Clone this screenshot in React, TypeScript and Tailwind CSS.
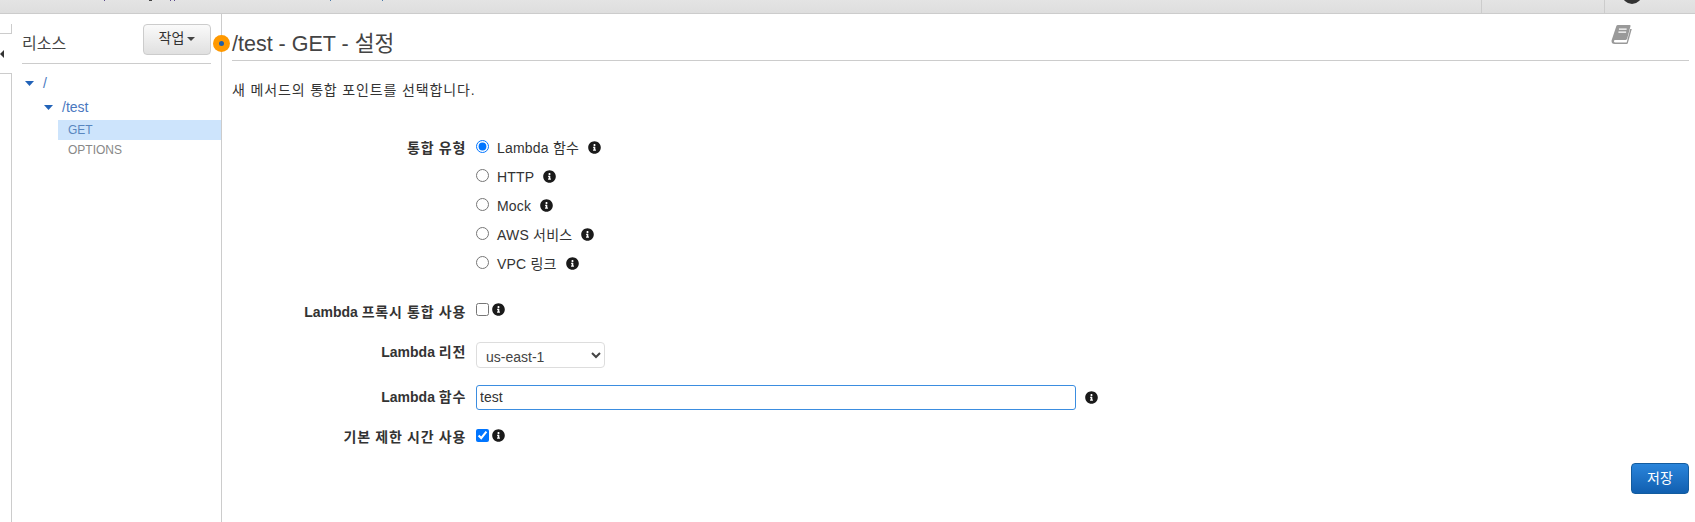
import React from "react";
import { FaInfoCircle } from "react-icons/fa";

const font = "font-['Liberation_Sans','Noto_Sans_CJK_KR',sans-serif]";

function Info({ className = "" }: { className?: string }) {
  return <FaInfoCircle className={`w-[13px] h-[13px] text-[#1a1a1a] shrink-0 ${className}`} />;
}

function Tri({ className = "" }: { className?: string }) {
  return (
    <svg width="9" height="5" viewBox="0 0 9 5" className={className}>
      <path d="M0 0H9L4.5 5Z" fill="#2263b8" />
    </svg>
  );
}

function RadioRow({ label, checked }: { label: string; checked?: boolean }) {
  return (
    <div className="h-[29px] flex items-center">
      <input type="radio" name="t" defaultChecked={checked} className="w-[13px] h-[13px] m-0 mb-[3px] shrink-0" />
      <span className="ml-[8px] text-[14px] leading-none tracking-[0.2px] text-[#333]">{label}</span>
      <Info className="ml-[9px]" />
    </div>
  );
}

function Row({ label, h, labelClass = "", children }: { label: React.ReactNode; h: string; labelClass?: string; children: React.ReactNode }) {
  return (
    <div className={`flex items-center ${h}`}>
      <div className={`w-[234px] shrink-0 text-right font-bold text-[14px] tracking-[0.7px] text-[#333] leading-none ${labelClass}`}>{label}</div>
      <div className="ml-[10px] flex items-center flex-1">{children}</div>
    </div>
  );
}

const Lam = () => <span className="tracking-normal">Lambda </span>;

export default function App() {
  return (
    <div className={`${font} w-[1695px] h-[522px] bg-white flex flex-col overflow-hidden relative`}>
      <header className="h-[14px] shrink-0 bg-gradient-to-b from-[#e4e4e4] to-[#dedede] border-b border-[#cccccc] flex justify-end relative">
        <span className="absolute left-[104px] top-0 w-[1px] h-[1px] bg-[#5a4a8a]" />
        <span className="absolute left-[149px] top-0 w-[3px] h-[1px] bg-[#444]" />
        <span className="absolute left-[170px] top-0 w-[1px] h-[1px] bg-[#5a4a8a]" />
        <span className="absolute left-[174px] top-0 w-[1px] h-[1px] bg-[#5a4a8a]" />
        <span className="absolute left-[330px] top-0 w-[1px] h-[1px] bg-[#4a7aa8]" />
        <span className="absolute left-[382px] top-0 w-[1px] h-[1px] bg-[#4a7aa8]" />
        <div className="w-[123px] border-l border-[#cccccc]" />
        <div className="w-[91px] border-l border-[#cccccc] pl-[17px] overflow-hidden">
          <div className="w-[20px] h-[20px] rounded-full bg-[#333] -mt-[16px]" />
        </div>
      </header>
      <div className="flex flex-1 min-h-0">
        <div className="w-[12px] shrink-0 flex flex-col">
          <div className="h-[10px] border-r border-b border-[#ccc] mt-[10px]" />
          <div className="h-[39px] flex items-center">
            <svg width="4" height="8" viewBox="0 0 4 8"><path d="M4 0V8L0 4Z" fill="#333" /></svg>
          </div>
          <div className="flex-1 border-r border-t border-[#ccc]" />
        </div>
        <aside className="w-[210px] shrink-0 border-r border-[#ccc]">
          <div className="mx-[10px] h-[40px] mt-[10px] border-b border-[#ccc] flex justify-between">
            <span className="mt-[10px] text-[16px] leading-[20px] text-[#444]">리소스</span>
            <button className="w-[68px] h-[31px] rounded-[4px] border border-[#ccc] bg-gradient-to-b from-[#fafafa] to-[#e0e0e0] text-[14px] text-[#333] flex items-center justify-center gap-[3px] pb-[2px]">
              작업
              <svg width="8" height="4" viewBox="0 0 8 4"><path d="M0 0H8L4 4Z" fill="#444" /></svg>
            </button>
          </div>
          <div className="pt-[7px]">
            <div className="h-[24px] flex items-center pl-[13px] text-[14px] text-[#4a78c0]">
              <Tri /><span className="ml-[9px]">/</span>
            </div>
            <div className="h-[25px] flex items-center pl-[32px] text-[14px] text-[#4a78c0]">
              <Tri /><span className="ml-[9px]">/test</span>
            </div>
            <div className="ml-[46px] h-[20px] bg-[#cde4fc] flex items-center pl-[10px] text-[12px] text-[#5a87bf]">GET</div>
            <div className="ml-[46px] h-[20px] flex items-center pl-[10px] text-[12px] text-[#888]">OPTIONS</div>
          </div>
        </aside>
        <main className="flex-1 min-w-0 pl-[10px] pr-[6px]">
          <div className="h-[47px] border-b border-[#ccc] flex items-end justify-between pb-[1px]">
            <h1 className="text-[21.5px] leading-[30px] text-[#444]">/test - GET - 설정</h1>
            <svg width="21" height="19" viewBox="0 0 20 18.5" className="mr-[57px] mb-[15px] shrink-0">
              <path d="M5 1Q5.3 0 6.5 0H18Q19 0 18.8 1L15.5 13.5Q15.2 14.5 14 14.5H4Q2.5 14.5 2.6 15.8Q2.7 17 4 17H15L18.5 4H20L16.2 17.5Q16 18.5 15 18.5H3.5Q0 18.5 .3 15Z" fill="#999" />
              <path d="M7.5 4H15M7 7H14.5" stroke="#fff" strokeWidth="1.2" />
            </svg>
          </div>
          <p className="mt-[20px] text-[14px] leading-[18px] text-[#333] tracking-[0.85px]">새 메서드의 통합 포인트를 선택합니다.</p>
          <div className="mt-[34px]">
            <div className="flex">
              <div className="w-[234px] shrink-0 text-right font-bold text-[14px] tracking-[0.7px] leading-none text-[#333] pt-[8px]">통합 유형</div>
              <div className="ml-[10px]">
                <RadioRow label="Lambda 함수" checked />
                <RadioRow label="HTTP" />
                <RadioRow label="Mock" />
                <RadioRow label="AWS 서비스" />
                <RadioRow label="VPC 링크" />
              </div>
            </div>
            <div className="mt-[15px]">
              <Row label={<><Lam />프록시 통합 사용</>} h="h-[37px]">
                <input type="checkbox" className="w-[13px] h-[13px] m-0 mb-[4px]" />
                <Info className="ml-[3px] mb-[4px]" />
              </Row>
              <Row label={<><Lam />리전</>} h="h-[49px]" labelClass="pb-[6px]">
                <select className="w-[129px] h-[26px] border border-[#ddd] rounded-[4px] pl-[5px] pt-[4px] text-[14px] text-[#444] bg-white">
                  <option>us-east-1</option>
                </select>
              </Row>
              <Row label={<><Lam />함수</>} h="h-[36px]">
                <input defaultValue="test" className="w-[600px] h-[25px] border border-[#3b8de0] rounded-[3px] px-[3px] text-[14px] text-[#333] outline-none" />
                <Info className="ml-[9px]" />
              </Row>
              <Row label="기본 제한 시간 사용" h="h-[44px]">
                <input type="checkbox" defaultChecked className="w-[13px] h-[13px] m-0 mb-[4px]" />
                <Info className="ml-[3px] mb-[4px]" />
              </Row>
            </div>
            <div className="flex justify-end mt-[4px]">
              <button className="w-[58px] h-[31px] rounded-[4px] border border-[#135c9f] bg-gradient-to-b from-[#2a85db] to-[#115fb0] text-[14px] text-white">저장</button>
            </div>
          </div>
        </main>
      </div>
      <div className="absolute left-[213px] top-[35px] w-[17px] h-[17px] rounded-full bg-[#ff9900] flex items-center justify-center">
        <div className="w-[5px] h-[5px] rounded-full bg-[#1f5fa8]" />
      </div>
    </div>
  );
}
